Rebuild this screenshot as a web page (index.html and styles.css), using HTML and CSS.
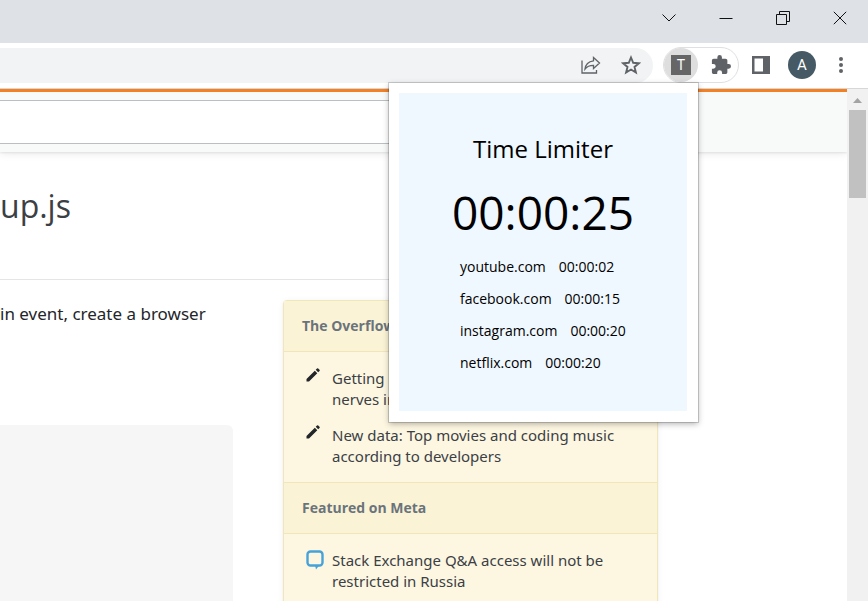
FILE: index.html
```html
<!DOCTYPE html>
<html lang="en">
<head>
<meta charset="utf-8">
<title>Time Limiter</title>
<link rel="stylesheet" href="styles.css">
</head>
<body>
<div class="browser">
  <div class="titlebar">
    <button class="window-button" aria-label="Search tabs"><svg width="14" height="14" viewBox="0 0 14 14"><path d="M.5 3.500l6.500 6.500 6.500-6.500"/></svg></button>
    <button class="window-button" aria-label="Minimize"><svg width="14" height="14" viewBox="0 0 14 14"><path d="M.5 7.500h13"/></svg></button>
    <button class="window-button" aria-label="Restore"><svg width="14" height="14" viewBox="0 0 14 14"><path d="M.5 3.500h10v10H.5zM3.500 3.500v-3h10v10h-3"/></svg></button>
    <button class="window-button" aria-label="Close"><svg width="14" height="14" viewBox="0 0 14 14"><path d="M.8.800l12.400 12.400M13.200.8L.8 13.200"/></svg></button>
  </div>

  <div class="toolbar">
    <div class="omnibox">
      <button class="tool" aria-label="Share this page"><svg width="20" height="20" viewBox="0 0 20 20" fill="none" stroke="#5f6368" stroke-width="1.300"><path d="M1 5.500V18h14.500v-3"/><path d="M12.500 2.500l6 5.500-6 5.500v-3.200c-3.500 0-6.500 1-8.500 3.700.5-4.500 3.500-7.500 8.500-8.200z"/></svg></button>
      <button class="tool" aria-label="Bookmark this page"><svg width="20" height="20" viewBox="0 0 20 20" fill="none" stroke="#5f6368" stroke-width="1.900"><path d="M10 2.500l2.200 5.300 5.700.4-4.400 3.700 1.400 5.600-4.900-3-4.900 3 1.400-5.600-4.400-3.700 5.700-.4z"/></svg></button>
    </div>
    <div class="extensions">
      <button class="extension-button" aria-label="Time Limiter"><span class="extension-letter">T</span></button>
      <button class="tool" aria-label="Extensions"><svg width="20" height="20" viewBox="1 1 22 22" fill="#5f6368"><path d="M20.500 11H19V7c0-1.100-.9-2-2-2h-4V3.500a2.500 2.500 0 0 0-5 0V5H4c-1.100 0-2 .9-2 2v3.800h1.500a2.700 2.700 0 0 1 0 5.400H2V20c0 1.100.9 2 2 2h3.800v-1.500a2.700 2.700 0 0 1 5.400 0V22H17c1.100 0 2-.9 2-2v-4h1.500a2.500 2.500 0 0 0 0-5z"/></svg></button>
    </div>
    <button class="tool panel-button" aria-label="Side panel"><svg width="18" height="18" viewBox="0 0 18 18"><path d="M0 0h18v18H0z" fill="#5f6368"/><path d="M2.500 2.500h8.500v13H2.500z" fill="#fff"/></svg></button>
    <button class="avatar" aria-label="Profile">A</button>
    <button class="tool menu-button" aria-label="Menu"><svg width="6" height="18" viewBox="0 0 6 18" fill="#5f6368"><circle cx="3" cy="3" r="2"/><circle cx="3" cy="9" r="2"/><circle cx="3" cy="15" r="2"/></svg></button>
  </div>

  <div class="viewport">
    <div class="page">
      <header class="site-header">
        <input class="search" type="search" aria-label="Search">
      </header>
      <main class="content">
        <h1>up.js</h1>
        <div class="columns">
          <div class="question">
            <p>in event, create a browser</p>
            <pre class="code"></pre>
          </div>
          <aside class="bulletin">
            <h2>The Overflow</h2>
            <ul>
              <li><svg class="pencil" width="14" height="14" viewBox="0 0 14 14" fill="#232629"><path d="M.5 11L8.800 2.700l2.500 2.500L3 13.500H.5zM9.700 1.800L11 .5a.9.9 0 0 1 1.200 0l1.300 1.300a.9.9 0 0 1 0 1.200l-1.300 1.300z"/></svg><a href="#">Getting<br>nerves in</a></li>
              <li><svg class="pencil" width="14" height="14" viewBox="0 0 14 14" fill="#232629"><path d="M.5 11L8.800 2.700l2.500 2.500L3 13.500H.5zM9.700 1.800L11 .5a.9.9 0 0 1 1.200 0l1.300 1.300a.9.9 0 0 1 0 1.200l-1.300 1.300z"/></svg><a href="#">New data: Top movies and coding music according to developers</a></li>
            </ul>
            <h2>Featured on Meta</h2>
            <ul>
              <li><svg class="bubble" width="18" height="20" viewBox="0 0 18 20"><path d="M4.500 1.500h9a3 3 0 0 1 3 3v8a3 3 0 0 1-3 3h-9a3 3 0 0 1-3-3v-8a3 3 0 0 1 3-3z" fill="none" stroke="#46a2d9" stroke-width="2.400"/><path d="M9 15h4.500L10 19.500z" fill="#46a2d9"/></svg><a href="#">Stack Exchange Q&amp;A access will not be restricted in Russia</a></li>
            </ul>
          </aside>
        </div>
      </main>
    </div>
    <div class="scrollbar"><svg class="scroll-arrow" width="9" height="5" viewBox="0 0 9 5"><path d="M0 5L4.500 0 9 5z" fill="#a3a3a3"/></svg><div class="scroll-thumb"></div></div>
  </div>

  <section class="popup" aria-label="Time Limiter">
    <div class="popup-panel">
      <h2>Time Limiter</h2>
      <div class="total">00:00:25</div>
      <ul class="sites">
        <li><span>youtube.com</span><time>00:00:02</time></li>
        <li><span>facebook.com</span><time>00:00:15</time></li>
        <li><span>instagram.com</span><time>00:00:20</time></li>
        <li><span>netflix.com</span><time>00:00:20</time></li>
      </ul>
    </div>
  </section>
</div>
</body>
</html>
```
FILE: styles.css
```css
* { box-sizing: border-box; }
body, h1, h2, p, ul, pre { margin: 0; padding: 0; }
body { font-family: "Open Sans", "Noto Sans", sans-serif; background: #fff; color: #232629; overflow: hidden; }
button { border: 0; padding: 0; background: none; font: inherit; display: flex; align-items: center; justify-content: center; }
svg { display: block; flex: none; }
ul { list-style: none; }
a { color: inherit; text-decoration: none; }

.browser { position: relative; height: 100vh; display: flex; flex-direction: column; overflow: hidden; }

.titlebar { display: flex; justify-content: flex-end; height: 43px; padding-bottom: 7px; background: #dee1e6; flex: none; }
.window-button { width: 57px; }
.window-button svg { fill: none; stroke: #111; stroke-width: 1; }

.toolbar { display: flex; align-items: center; height: 46px; padding: 0 17px 1px 0; border-bottom: 1px solid #d5d7da; flex: none; }
.omnibox { flex: 1; display: flex; align-items: center; justify-content: flex-end; gap: 20px; height: 35px; padding-right: 12px; border-radius: 0 18px 18px 0; background: #f1f3f4; }
.tool { width: 20px; height: 24px; }
.extensions { display: flex; align-items: center; gap: 13px; height: 36px; margin-left: 10px; padding-right: 7px; border: 1px solid #dfe0e2; border-radius: 18px; }
.extension-button { width: 34px; height: 34px; border-radius: 50%; background: #dedede; }
.extension-letter { width: 20px; height: 20px; background: #666; color: #fff; font: 14px/20px Roboto, sans-serif; text-align: center; }
.panel-button { margin-left: 12px; }
.avatar { width: 28px; height: 28px; margin-left: 17px; border-radius: 50%; background: #455a64; color: #fff; font: 15px/28px Roboto, sans-serif; }
.menu-button { margin-left: 15px; }

.viewport { display: flex; flex: 1; min-height: 0; }
.page { flex: 1; min-width: 0; overflow: hidden; }
.site-header { height: 63px; padding-top: 8px; padding-right: 190px; border-top: 3px solid #f48024; background: #f8f9f9; box-shadow: 0 1px 2px rgba(0,0,0,.08), 0 2px 8px rgba(0,0,0,.08); }
.search { display: block; width: 100%; height: 44px; border: 1px solid #babfc4; border-left: 0; background: #fff; font: inherit; appearance: none; }

.content { padding-right: 189px; }
h1 { padding: 29px 0 49px; border-bottom: 1px solid #e3e6e8; font-size: 32px; line-height: 49px; font-weight: 400; color: #3b4045; }
.columns { display: flex; align-items: flex-start; gap: 50px; padding-top: 20px; }
.question { flex: 1; font-family: "Noto Sans", sans-serif; font-size: 17px; line-height: 28px; white-space: nowrap; }
.code { height: 220px; margin-top: 97px; border-radius: 0 6px 6px 0; background: #f6f6f6; }

.bulletin { width: 375px; border: 1px solid #f1e5bc; border-radius: 4px; background: #fdf7e2; box-shadow: 0 1px 2px rgba(0,0,0,.05), 0 1px 6px rgba(0,0,0,.06); font-family: "Noto Sans", sans-serif; font-size: 15px; line-height: 21px; color: #3b4045; }
.bulletin h2 { padding: 14px 18px 15px; border-bottom: 1px solid #f1e5bc; background: #fbf3d5; font-family: "Open Sans", sans-serif; font-size: 14px; line-height: 21px; font-weight: 700; color: #6a737c; }
.bulletin ul + h2 { border-top: 1px solid #f1e5bc; }
.bulletin ul { display: grid; gap: 15px; padding: 16px 18px 15px 22px; }
.bulletin li { display: grid; grid-template-columns: 18px 1fr; gap: 8px; }

.scrollbar { width: 21px; padding: 9px 2px 0; background: #f1f1f1; flex: none; }
.scroll-arrow { margin: 0 auto 7px; }
.scroll-thumb { height: 88px; background: #c1c1c1; }

.popup { position: absolute; top: 83px; right: 170px; width: 309px; padding: 10px 11px 11px 10px; background: #fff; box-shadow: 0 0 0 1px rgba(0,0,0,.16), 0 2px 6px rgba(0,0,0,.3); color: #000; }
.popup-panel { display: flex; flex-direction: column; align-items: center; padding: 38px 0 26px; background: #eff7ff; }
.popup h2 { font-size: 24px; line-height: 36px; font-weight: 400; }
.total { margin: 12px 0; font-size: 46px; line-height: 66px; font-weight: 400; }
.sites { align-self: stretch; padding-left: 61px; font-size: 14px; line-height: 20px; }
.sites li { display: flex; gap: 13px; margin-bottom: 12px; }
```
